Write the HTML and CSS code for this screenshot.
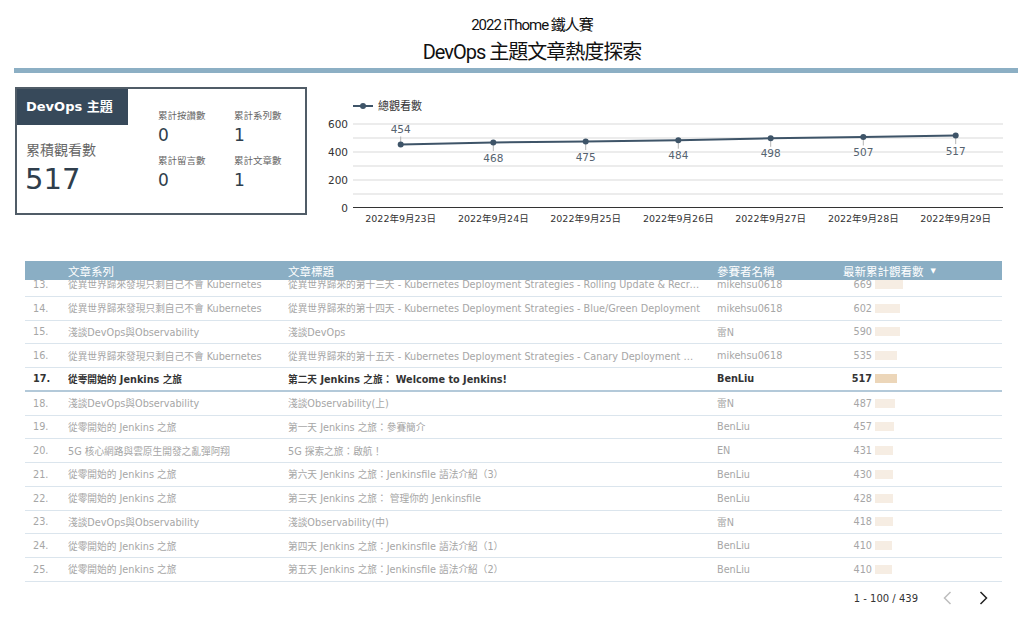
FILE: index.html
```html
<!DOCTYPE html>
<html lang="zh-Hant">
<head>
<meta charset="utf-8">
<title>DevOps 主題文章熱度探索</title>
<link rel="stylesheet" href="styles.css">
</head>
<body>
<div class="page">
  <header class="head">
    <div class="sub">2022 iThome 鐵人賽</div>
    <h1 class="title">DevOps 主題文章熱度探索</h1>
  </header>
  <div class="rule"></div>

  <section class="top">
    <div class="card">
      <div class="card-left">
        <div class="tab">DevOps 主題</div>
        <div class="big-label">累積觀看數</div>
        <div class="big-num">517</div>
      </div>
      <div class="stats">
        <div class="stat"><div class="stat-label">累計按讚數</div><div class="stat-num">0</div></div>
        <div class="stat"><div class="stat-label">累計系列數</div><div class="stat-num">1</div></div>
        <div class="stat"><div class="stat-label">累計留言數</div><div class="stat-num">0</div></div>
        <div class="stat"><div class="stat-label">累計文章數</div><div class="stat-num">1</div></div>
      </div>
    </div>

    <svg class="chart" width="690" height="142" viewBox="0 0 690 142">
      <g class="legend">
        <line x1="33" y1="16" x2="53" y2="16" class="series-line"/>
        <circle cx="43" cy="16" r="3" class="series-dot"/>
        <text x="58" y="16" class="legend-text">總觀看數</text>
      </g>
      <g class="grid">
        <line x1="33" y1="34" x2="683" y2="34"/>
        <line x1="33" y1="48" x2="683" y2="48"/>
        <line x1="33" y1="62" x2="683" y2="62"/>
        <line x1="33" y1="76" x2="683" y2="76"/>
        <line x1="33" y1="90" x2="683" y2="90"/>
        <line x1="33" y1="104" x2="683" y2="104"/>
      </g>
      <line x1="33" y1="117.5" x2="683" y2="117.5" class="axis"/>
      <g class="ylab">
        <text x="28" y="34">600</text>
        <text x="28" y="62">400</text>
        <text x="28" y="90">200</text>
        <text x="28" y="118">0</text>
      </g>
      <g class="xlab">
        <text x="80.7" y="128">2022年9月23日</text>
        <text x="173.3" y="128">2022年9月24日</text>
        <text x="265.7" y="128">2022年9月25日</text>
        <text x="358.3" y="128">2022年9月26日</text>
        <text x="450.7" y="128">2022年9月27日</text>
        <text x="543.3" y="128">2022年9月28日</text>
        <text x="635.7" y="128">2022年9月29日</text>
      </g>
      <g class="ticks">
        <line x1="80.7" y1="46.5" x2="80.7" y2="52.5"/>
        <line x1="173.3" y1="55" x2="173.3" y2="61"/>
        <line x1="265.7" y1="54" x2="265.7" y2="60"/>
        <line x1="358.3" y1="52.7" x2="358.3" y2="58.7"/>
        <line x1="450.7" y1="50.8" x2="450.7" y2="56.8"/>
        <line x1="543.3" y1="49.5" x2="543.3" y2="55.5"/>
        <line x1="635.7" y1="48.1" x2="635.7" y2="54.1"/>
      </g>
      <polyline class="series-line" points="80.7,54.44 173.3,52.48 265.7,51.5 358.3,50.24 450.7,48.28 543.3,47.02 635.7,45.62"/>
      <g class="series-dot">
        <circle cx="80.7" cy="54.44" r="3"/>
        <circle cx="173.3" cy="52.48" r="3"/>
        <circle cx="265.7" cy="51.5" r="3"/>
        <circle cx="358.3" cy="50.24" r="3"/>
        <circle cx="450.7" cy="48.28" r="3"/>
        <circle cx="543.3" cy="47.02" r="3"/>
        <circle cx="635.7" cy="45.62" r="3"/>
      </g>
      <g class="dlab">
        <text x="80.7" y="39">454</text>
        <text x="173.3" y="68.3">468</text>
        <text x="265.7" y="66.7">475</text>
        <text x="358.3" y="65">484</text>
        <text x="450.7" y="63.3">498</text>
        <text x="543.3" y="61.7">507</text>
        <text x="635.7" y="60.7">517</text>
      </g>
    </svg>
  </section>

  <section class="table">
    <div class="thead">
      <div class="c-num"></div>
      <div class="c-series">文章系列</div>
      <div class="c-title">文章標題</div>
      <div class="c-user">參賽者名稱</div>
      <div class="c-views">最新累計觀看數<span class="sort">▼</span></div>
    </div>
    <div class="tbody-wrap">
      <div class="tbody">
        <div class="row"><div class="c-num">13.</div><div class="c-series">從異世界歸來發現只剩自己不會 Kubernetes</div><div class="c-title">從異世界歸來的第十三天 - Kubernetes Deployment Strategies - Rolling Update &amp; Recreate</div><div class="c-user">mikehsu0618</div><div class="c-views"><span class="val">669</span><span class="vbar" style="width:28px"></span></div></div>
        <div class="row"><div class="c-num">14.</div><div class="c-series">從異世界歸來發現只剩自己不會 Kubernetes</div><div class="c-title">從異世界歸來的第十四天 - Kubernetes Deployment Strategies - Blue/Green Deployment</div><div class="c-user">mikehsu0618</div><div class="c-views"><span class="val">602</span><span class="vbar" style="width:25px"></span></div></div>
        <div class="row"><div class="c-num">15.</div><div class="c-series">淺談DevOps與Observability</div><div class="c-title">淺談DevOps</div><div class="c-user">雷N</div><div class="c-views"><span class="val">590</span><span class="vbar" style="width:25px"></span></div></div>
        <div class="row"><div class="c-num">16.</div><div class="c-series">從異世界歸來發現只剩自己不會 Kubernetes</div><div class="c-title">從異世界歸來的第十五天 - Kubernetes Deployment Strategies - Canary Deployment 金絲雀部署</div><div class="c-user">mikehsu0618</div><div class="c-views"><span class="val">535</span><span class="vbar" style="width:22px"></span></div></div>
        <div class="row active"><div class="c-num">17.</div><div class="c-series">從零開始的 Jenkins 之旅</div><div class="c-title">第二天 Jenkins 之旅： Welcome to Jenkins!</div><div class="c-user">BenLiu</div><div class="c-views"><span class="val">517</span><span class="vbar" style="width:22px"></span></div></div>
        <div class="row"><div class="c-num">18.</div><div class="c-series">淺談DevOps與Observability</div><div class="c-title">淺談Observability(上)</div><div class="c-user">雷N</div><div class="c-views"><span class="val">487</span><span class="vbar" style="width:20px"></span></div></div>
        <div class="row"><div class="c-num">19.</div><div class="c-series">從零開始的 Jenkins 之旅</div><div class="c-title">第一天 Jenkins 之旅：參賽簡介</div><div class="c-user">BenLiu</div><div class="c-views"><span class="val">457</span><span class="vbar" style="width:19px"></span></div></div>
        <div class="row"><div class="c-num">20.</div><div class="c-series">5G 核心網路與雲原生開發之亂彈阿翔</div><div class="c-title">5G 探索之旅：啟航！</div><div class="c-user">EN</div><div class="c-views"><span class="val">431</span><span class="vbar" style="width:18px"></span></div></div>
        <div class="row"><div class="c-num">21.</div><div class="c-series">從零開始的 Jenkins 之旅</div><div class="c-title">第六天 Jenkins 之旅：Jenkinsfile 語法介紹（3）</div><div class="c-user">BenLiu</div><div class="c-views"><span class="val">430</span><span class="vbar" style="width:18px"></span></div></div>
        <div class="row"><div class="c-num">22.</div><div class="c-series">從零開始的 Jenkins 之旅</div><div class="c-title">第三天 Jenkins 之旅： 管理你的 Jenkinsfile</div><div class="c-user">BenLiu</div><div class="c-views"><span class="val">428</span><span class="vbar" style="width:18px"></span></div></div>
        <div class="row"><div class="c-num">23.</div><div class="c-series">淺談DevOps與Observability</div><div class="c-title">淺談Observability(中)</div><div class="c-user">雷N</div><div class="c-views"><span class="val">418</span><span class="vbar" style="width:18px"></span></div></div>
        <div class="row"><div class="c-num">24.</div><div class="c-series">從零開始的 Jenkins 之旅</div><div class="c-title">第四天 Jenkins 之旅：Jenkinsfile 語法介紹（1）</div><div class="c-user">BenLiu</div><div class="c-views"><span class="val">410</span><span class="vbar" style="width:17px"></span></div></div>
        <div class="row"><div class="c-num">25.</div><div class="c-series">從零開始的 Jenkins 之旅</div><div class="c-title">第五天 Jenkins 之旅：Jenkinsfile 語法介紹（2）</div><div class="c-user">BenLiu</div><div class="c-views"><span class="val">410</span><span class="vbar" style="width:17px"></span></div></div>
      </div>
    </div>
  </section>

  <div class="pager">
    <span class="range">1 - 100 / 439</span>
    <svg class="chev prev" width="9" height="14" viewBox="0 0 9 14"><polyline points="7.5,1 1.5,7 7.5,13"/></svg>
    <svg class="chev next" width="9" height="14" viewBox="0 0 9 14"><polyline points="1.5,1 7.5,7 1.5,13"/></svg>
  </div>
</div>
</body>
</html>
```

FILE: styles.css
```css
* { box-sizing: border-box; }
html, body { margin: 0; padding: 0; background: #ffffff; }
body {
  width: 1024px;
  height: 619px;
  overflow: hidden;
  font-family: "DejaVu Sans", "Noto Sans CJK TC", sans-serif;
  color: #333;
}

.head {
  text-align: center;
  padding-top: 16px;
  padding-left: 40px;
  font-family: "Roboto", "Noto Sans CJK TC", sans-serif;
  color: #111;
}
.sub {
  font-size: 15px;
  line-height: 18px;
  letter-spacing: -1px;
}
.title {
  margin: 6px 0 0;
  font-size: 20px;
  line-height: 24px;
  font-weight: normal;
  letter-spacing: -1px;
}
.rule {
  margin: 4px 6px 0 14px;
  height: 5px;
  background: #8cafc4;
}

.top {
  display: flex;
  align-items: flex-start;
  gap: 13px;
  margin: 14px 0 0 15px;
}
.card {
  flex: none;
  width: 292px;
  height: 128px;
  border: 2px solid #505c67;
  display: flex;
}
.card-left {
  flex: none;
  width: 111px;
  display: flex;
  flex-direction: column;
}
.tab {
  height: 36px;
  background: #37495a;
  color: #fff;
  font-weight: bold;
  font-size: 13px;
  line-height: 36px;
  padding-left: 9px;
  white-space: nowrap;
}
.big-label {
  margin-top: 15px;
  padding-left: 9px;
  font-size: 14px;
  line-height: 20px;
  color: #666;
  white-space: nowrap;
}
.big-num {
  margin-top: 3px;
  padding-left: 8px;
  font-size: 29px;
  line-height: 32px;
  color: #2f3e4c;
}
.stats {
  flex: none;
  margin-left: 30px;
  padding-top: 21px;
  display: grid;
  grid-template-columns: 76px 76px;
  row-gap: 10px;
  align-content: start;
}
.stat-label {
  font-size: 9.5px;
  line-height: 12px;
  color: #666;
  white-space: nowrap;
}
.stat-num {
  margin-top: 3px;
  font-size: 17px;
  line-height: 20px;
  color: #2f3e4c;
}

.chart {
  display: block;
  flex: none;
  margin-top: 3px;
  font-family: "DejaVu Sans", "Noto Sans CJK TC", sans-serif;
}
.chart text { dominant-baseline: central; }
.series-line { stroke: #3e5468; stroke-width: 2; fill: none; }
.series-dot { fill: #3e5468; }
.legend-text { font-size: 11px; fill: #333; }
.grid line { stroke: #e6e6e6; stroke-width: 1.5; }
.axis { stroke: #333; stroke-width: 1; }
.ylab text { font-size: 10.5px; fill: #333; text-anchor: end; }
.xlab text { font-size: 9.5px; fill: #333; text-anchor: middle; }
.ticks line { stroke: #b5b5b5; stroke-width: 1; }
.dlab text { font-size: 10.5px; fill: #56636f; text-anchor: middle; }

.table {
  margin: 29px 0 0 25px;
  width: 977px;
  font-size: 9.7px;
}
.thead, .row {
  display: flex;
  align-items: center;
}
.thead {
  height: 19px;
  background: #8aaec4;
  color: #fff;
  font-size: 11.5px;
  position: relative;
  z-index: 1;
}
.sort { font-size: 7px; margin-left: 7px; }
.tbody-wrap {
  overflow: hidden;
  height: 302px;
}
.tbody { margin-top: -7px; }
.row {
  height: 23.75px;
  border-bottom: 1.5px solid #dbe5ed;
  color: #a6a6a6;
}
.row.active {
  color: #333;
  font-weight: bold;
  border-bottom: 2px solid #b3c9d9;
}
.c-num { width: 43px; padding-left: 8px; flex: none; }
.c-series { width: 220px; flex: none; white-space: nowrap; overflow: hidden; }
.c-title {
  width: 429px;
  flex: none;
  padding-right: 15px;
  white-space: nowrap;
  overflow: hidden;
  text-overflow: ellipsis;
}
.c-user { width: 126px; flex: none; white-space: nowrap; }
.c-views { flex: 1; display: flex; align-items: center; white-space: nowrap; }
.val { width: 29px; text-align: right; }
.vbar {
  display: block;
  height: 9px;
  margin-left: 3px;
  background: #f6ede3;
}
.row.active .vbar { background: #ecd6b9; }

.pager {
  display: flex;
  justify-content: flex-end;
  align-items: center;
  margin-top: 8px;
  padding-right: 36px;
  height: 16px;
  font-size: 10px;
  color: #333;
}
.range { margin-right: 25px; }
.chev { display: block; fill: none; stroke-width: 1.5; }
.prev { stroke: #bdbdbd; margin-right: 27px; }
.next { stroke: #222; }
```
